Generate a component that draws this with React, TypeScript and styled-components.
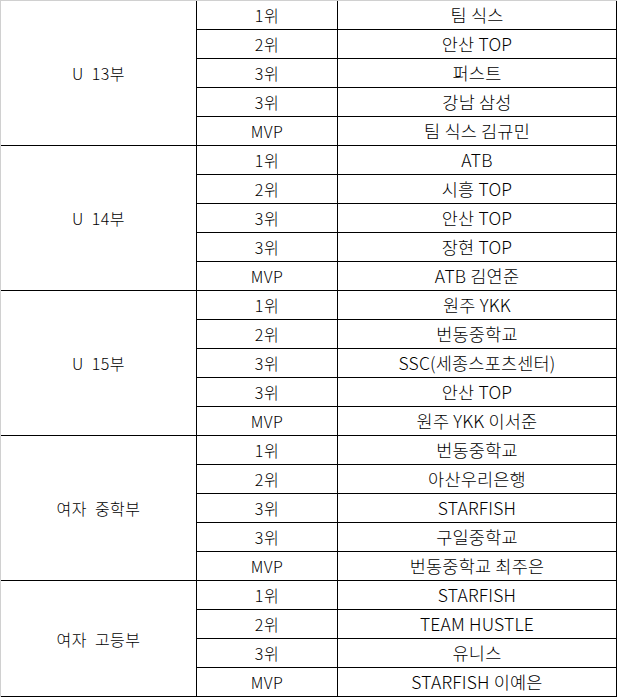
import React from "react";
import styled, { createGlobalStyle } from "styled-components";

const Global = createGlobalStyle`
  html, body { margin: 0; padding: 0; background: #ffffff; }
  body { font-family: "Noto Sans CJK KR", "Noto Sans", sans-serif; }
`;

const Table = styled.table`
  border-collapse: separate;
  border-spacing: 0;
  border-top: 1px solid #d0d0d0;
  border-left: 1px solid #d0d0d0;
  table-layout: fixed;
  width: 617px;
`;

const Cell = styled.td<{ $kind: "group" | "rank" | "team" }>`
  height: 28px;
  padding: 0;
  border-right: 1px solid #000;
  border-bottom: 1px solid #000;
  text-align: center;
  vertical-align: middle;
  white-space: nowrap;
  color: #000;
  font-family: "Noto Sans CJK KR", "Noto Sans", sans-serif;
  font-weight: 300;
  font-size: ${(p) => (p.$kind === "team" ? "17.5px" : "16px")};
  word-spacing: ${(p) => (p.$kind === "group" ? "4px" : "0")};
  letter-spacing: ${(p) => (p.$kind === "team" ? "0.2px" : "0.5px")};
  line-height: 28px;
  box-sizing: content-box;
`;

const Col = styled.col<{ $w: number }>`
  width: ${(p) => p.$w}px;
`;

type Group = { name: string; rows: [string, string][] };

const data: Group[] = [
  {
    name: "U 13부",
    rows: [
      ["1위", "팀 식스"],
      ["2위", "안산 TOP"],
      ["3위", "퍼스트"],
      ["3위", "강남 삼성"],
      ["MVP", "팀 식스 김규민"],
    ],
  },
  {
    name: "U 14부",
    rows: [
      ["1위", "ATB"],
      ["2위", "시흥 TOP"],
      ["3위", "안산 TOP"],
      ["3위", "장현 TOP"],
      ["MVP", "ATB 김연준"],
    ],
  },
  {
    name: "U 15부",
    rows: [
      ["1위", "원주 YKK"],
      ["2위", "번동중학교"],
      ["3위", "SSC(세종스포츠센터)"],
      ["3위", "안산 TOP"],
      ["MVP", "원주 YKK 이서준"],
    ],
  },
  {
    name: "여자 중학부",
    rows: [
      ["1위", "번동중학교"],
      ["2위", "아산우리은행"],
      ["3위", "STARFISH"],
      ["3위", "구일중학교"],
      ["MVP", "번동중학교 최주은"],
    ],
  },
  {
    name: "여자 고등부",
    rows: [
      ["1위", "STARFISH"],
      ["2위", "TEAM HUSTLE"],
      ["3위", "유니스"],
      ["MVP", "STARFISH 이예은"],
    ],
  },
];

export default function App() {
  return (
    <>
      <Global />
      <Table>
        <colgroup>
          <Col $w={196} />
          <Col $w={141} />
          <Col $w={279} />
        </colgroup>
        <tbody>
          {data.map((g) =>
            g.rows.map((r, i) => (
              <tr key={g.name + i}>
                {i === 0 && (
                  <Cell $kind="group" rowSpan={g.rows.length}>
                    {g.name}
                  </Cell>
                )}
                <Cell $kind="rank">{r[0]}</Cell>
                <Cell $kind="team">{r[1]}</Cell>
              </tr>
            ))
          )}
        </tbody>
      </Table>
    </>
  );
}
